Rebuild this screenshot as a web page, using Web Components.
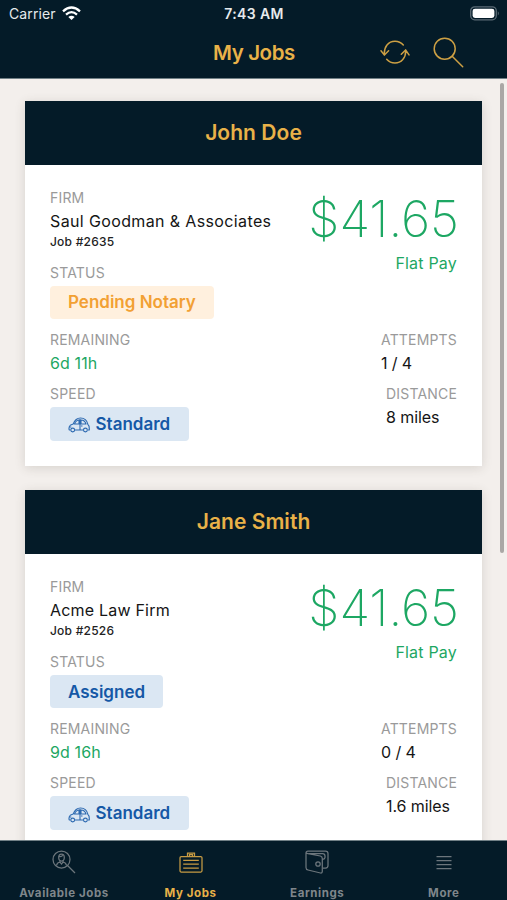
<!DOCTYPE html>
<html lang="en">
<head>
<meta charset="utf-8">
<title>My Jobs</title>
<style>
html,body{margin:0;height:100%;overflow:hidden}
body{font-family:Inter,"Liberation Sans",sans-serif;--navy:#041b28;--gold:#e9b248;--green:#1da763}
</style>
</head>
<body>
<jobs-app></jobs-app>
<script>
const define = (name, html) => customElements.define(name, class extends HTMLElement {
  constructor() {
    super();
    this.attachShadow({ mode: 'open' });
  }
  connectedCallback() {
    this.shadowRoot.innerHTML = typeof html === 'function' ? html(this) : html;
  }
});

define('status-bar', `
<style>
:host{display:grid;grid-template-columns:1fr auto 1fr;align-items:center;height:27px;padding:0 7px 0 9px;color:#e6eaec;font-size:14px;line-height:27px}
.l{display:flex;align-items:center;gap:6px;letter-spacing:.12px}
.t{font-weight:600;font-size:14px;letter-spacing:.35px;margin-right:1px}
.r{justify-self:end;display:flex}
svg{display:block}
</style>
<div class="l"><span>Carrier</span><svg width="19" height="15" viewBox="0 0 19 15" fill="none" stroke="#fff" stroke-width="2.3"><path d="M1 5.3Q9.500-2.300 18 5.300"/><path d="M4 8.600Q9.500 3.700 15 8.600"/><path d="M9.500 14 6.300 10.900Q9.500 8.400 12.700 10.900Z" fill="#fff" stroke="none"/></svg></div>
<div class="t">7:43 AM</div>
<div class="r"><svg width="30" height="15" viewBox="0 0 30 15"><rect x=".7" y=".8" width="25.600" height="13" rx="4" fill="none" stroke="#5b6b75" stroke-width="1.300"/><rect x="2.600" y="2.700" width="21.800" height="9.200" rx="2.400" fill="#fff"/><path d="M27.800 5.200q2 2.100 0 4.200z" fill="#5b6b75"/></svg></div>`);

define('nav-bar', `
<style>
:host{display:grid;grid-template-columns:1fr auto 1fr;align-items:center;height:51px;padding:0 43px 0 44px;color:var(--gold)}
h1{grid-column:2;margin:0;font-size:20.500px;line-height:50px;font-weight:600;letter-spacing:-.4px}
.i{justify-self:end;display:flex;align-items:center;gap:23px}
svg{display:block;fill:none;stroke:#cda044;stroke-width:1.500;stroke-linecap:round;stroke-linejoin:round}
</style>
<h1><slot></slot></h1>
<div class="i">
<svg width="30" height="26" viewBox="0 0 30 26"><path d="M4.400 15C3.700 6.500 8.500 1.200 15 1.200q5 0 8.300 3.800M1 10.800l3.400 4.300 4.200-4.300"/><path d="M25.600 10C26.300 18 21 23 15 23q-5 0-8.300-3.800M21.300 14.300l4.300-4.400 3.400 5"/></svg>
<svg width="31" height="31" viewBox="0 0 31 31"><circle cx="11.700" cy="11.700" r="10.500"/><path d="M19.200 19.200 29.700 29.700"/></svg>
</div>`);

define('field-item', el => `
<style>
:host{display:block}
.k{font-size:14px;line-height:18px;color:#9a9a9a;letter-spacing:.18px}
.v{font-size:16px;line-height:28px;color:#151515;letter-spacing:var(--track,-.1px)}
</style>
<div class="k">${el.getAttribute('label')}</div><div class="v"><slot></slot></div>`);

define('tag-pill', el => `
<style>
:host{display:block}
.k{font-size:14px;line-height:18px;color:#9a9a9a;letter-spacing:.18px}
.p{display:flex;width:max-content;align-items:center;gap:5.500px;box-sizing:border-box;height:33px;margin-top:4px;padding:0 18px;border-radius:4px;font-size:17px;font-weight:600;color:#1558a6;background:#dbe7f3}
.amber{color:#f2a033;background:#fff0de}
.car{height:34px;padding-right:19px}
svg{display:block;margin-top:3px}
</style>
<div class="k">${el.getAttribute('label')}</div>
<div class="p ${el.getAttribute('kind')}">${el.getAttribute('kind') === 'car' ? `<svg width="22" height="16" viewBox="0 0 22 16" fill="none" stroke="#2c69b0" stroke-width="1.100" stroke-linejoin="round"><path d="M2.400 13H1.200Q.4 9.500 2.700 7.900L5.200 7Q7.500 1 12.500 1 18.500 1 19.800 7.200 21.500 8.500 21.300 13H19.800M7 13h8"/><circle cx="4.700" cy="13" r="1.900"/><circle cx="17.400" cy="13" r="1.900"/><path d="M6.500 7Q8 3.200 11 3V7ZM13 3V7H18Q16.800 3 13 3ZM12 2V13M13 9h1.500M1.300 10h2"/></svg>` : ''}<span><slot></slot></span></div>`);

define('job-card', el => {
  const a = n => el.getAttribute(n);
  return `
<style>
:host{display:block;box-sizing:border-box;height:365px;background:#fff;box-shadow:0 2px 10px rgba(70,60,50,.16);flex:none}
h2{margin:0;height:64px;line-height:64px;text-align:center;background:var(--navy);color:var(--gold);font-size:21px;font-weight:600;letter-spacing:.05px}
.b{padding:24px 25px 0}
.row{display:flex;justify-content:space-between}
.firm{--track:${a('track')}}
.job{font-size:12px;line-height:14px;color:#222;font-weight:500;letter-spacing:.22px}
.top{height:75px}
.pay{text-align:right;color:var(--green);font-size:16px;line-height:24px;letter-spacing:.2px}
.amt{font-size:50px;font-weight:200;line-height:61px;letter-spacing:0;margin:0 -2px 1px 0}
.st{height:67.400px}
.rem{height:54px}
.g{color:var(--green);letter-spacing:.12px}
</style>
<h2>${a('client')}</h2>
<div class="b">
<div class="row top"><div><field-item class="firm" label="FIRM">${a('firm')}</field-item><div class="job">Job #${a('job')}</div></div>
<div class="pay"><div class="amt">$41.65</div><div class="flat">Flat Pay</div></div></div>
<tag-pill class="st" label="STATUS" kind="${a('kind')}">${a('status')}</tag-pill>
<div class="row rem"><field-item label="REMAINING"><span class="g">${a('remaining')}</span></field-item><field-item label="ATTEMPTS">${a('attempts')}</field-item></div>
<div class="row"><tag-pill label="SPEED" kind="car">Standard</tag-pill><field-item label="DISTANCE">${a('distance')}</field-item></div>
</div>`;
});

const icons = {
  search: '<svg width="24" height="24" viewBox="0 0 24 24"><circle cx="9.500" cy="9.500" r="8.500"/><path d="M15.500 15.500 23 23M4.500 15.500Q5 12.500 8 12M14.500 15.500Q14 12.500 11 12M8 12v-1.500M11 12v-1.500M8 12l1.500 2 1.500-2"/><ellipse cx="9.500" cy="7.500" rx="2.800" ry="3.500"/><path d="M6.800 6.500q3 .5 4-1.200"/></svg>',
  clip: '<svg width="24" height="21" viewBox="0 0 24 21"><rect x="1" y="4.500" width="22" height="15.500" rx="1.200"/><path d="M8.500 4.500V1h7v3.500M10.500 4.500v-2h3v2M4.200 8.300h15.600M4.200 12.200h15.600M4.200 16h15.600"/></svg>',
  wallet: '<svg width="24" height="24" viewBox="0 0 24 24"><path d="M18 18h2.500q2.500 0 2.500-2.500V3.500Q23 1 20.500 1H3Q1 1 1 3v14.500q0 2 2 2.500l12.500 3q1.800.3 1.800-1.700V8.500q0-2-2-2.500L3 3.600Q1 3.200 1 2.500M4 3.500h13.500Q20 3.500 20 6v1.500q0 1.500-2.500 2"/><circle cx="13" cy="14" r="2.200"/></svg>',
  menu: '<svg width="16" height="15" viewBox="0 0 16 15"><path d="M.5 1.500h15M.5 5.500h15M.5 9.500h15M.5 13.500h15"/></svg>'
};
define('tab-item', el => `
<style>
:host{display:flex;flex-direction:column;align-items:center;color:#7f868b;font-size:11.500px;font-weight:700;line-height:16px;letter-spacing:.58px;white-space:nowrap}
:host([active]){color:var(--gold)}
.i{height:29px;display:flex;align-items:center;margin-bottom:8px}
svg{display:block;fill:none;stroke:currentColor;stroke-width:1.250;opacity:.85}
</style>
<div class="i">${icons[el.getAttribute('icon')]}</div><span><slot></slot></span>`);

define('tab-bar', `
<style>
:host{display:grid;grid-template-columns:repeat(4,126.600px);padding:7px 0 0 .7px;height:52.500px;background:var(--navy);border-top:1px solid #718086;flex:none}
</style><slot></slot>`);

define('jobs-app', `
<style>
:host{display:flex;flex-direction:column;width:507px;height:900px;background:#f3efec;overflow:hidden}
header{flex:none;background:var(--navy);height:78px;border-bottom:1px solid #718086}
main{flex:1;min-height:0;overflow:hidden;position:relative}
.list{display:flex;flex-direction:column;gap:24.500px;padding:21.500px 25px 0}
.bar{position:absolute;top:4px;right:3px;width:4px;height:470px;border-radius:2px;background:#aaa7a5}
</style>
<header><status-bar></status-bar><nav-bar>My Jobs</nav-bar></header>
<main><div class="list">
<job-card client="John Doe" firm="Saul Goodman &amp; Associates" track=".37px" job="2635" kind="amber" status="Pending Notary" remaining="6d 11h" attempts="1 / 4" distance="8 miles"></job-card>
<job-card client="Jane Smith" firm="Acme Law Firm" track=".2px" job="2526" kind="blue" status="Assigned" remaining="9d 16h" attempts="0 / 4" distance="1.6 miles"></job-card>
</div><div class="bar"></div></main>
<tab-bar><tab-item icon="search">Available Jobs</tab-item><tab-item icon="clip" active>My Jobs</tab-item><tab-item icon="wallet">Earnings</tab-item><tab-item icon="menu">More</tab-item></tab-bar>`);
</script>
</body>
</html>
